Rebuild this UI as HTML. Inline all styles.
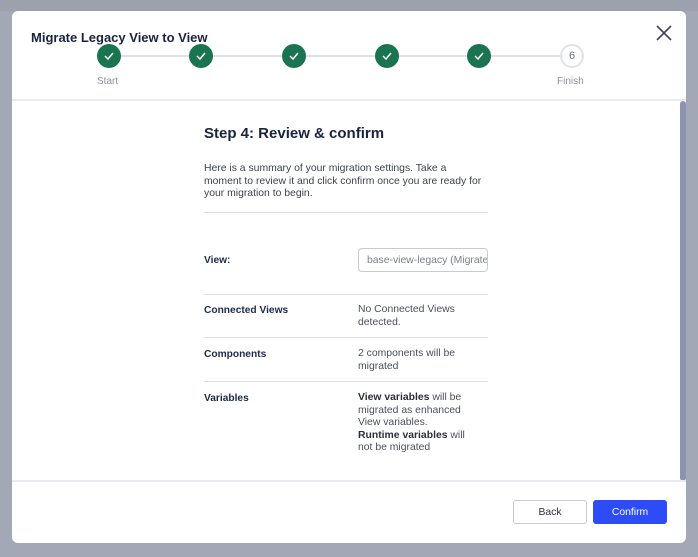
<!DOCTYPE html>
<html><head><style>
*{box-sizing:border-box;margin:0;padding:0}
body{width:698px;height:557px;background:#a3a8b6;font-family:"Liberation Sans",sans-serif;position:relative;overflow:hidden}
.topbar{position:absolute;left:0;top:0;width:698px;height:11px;background:#9ca1ae}
.modal{position:absolute;left:12px;top:11px;width:674px;height:532px;background:#fff;border-radius:6px;overflow:hidden}
.title{position:absolute;left:19px;top:19px;font-size:13px;font-weight:bold;color:#1a2340}
.x{position:absolute;left:643px;top:13px}
.line{position:absolute;top:44px;height:2px;background:#dfe1e8}
.dot{position:absolute;top:33px;width:24px;height:24px;border-radius:50%;background:#1b7450}
.dot svg{position:absolute;left:6px;top:7px}
.six{position:absolute;left:548px;top:33px;width:24px;height:24px;border-radius:50%;border:2px solid #e0e2e8;color:#6b7080;font-size:11px;text-align:center;line-height:20px}
.lbl{position:absolute;top:65px;font-size:10px;color:#8c90a0}
.hr{position:absolute;left:0;width:674px;height:2px;background:#e9eaf0}
.scroll{position:absolute;left:668px;top:90px;width:6px;height:380px;background:#8e93b0;border-radius:3px}
.h{position:absolute;left:192px;top:114px;font-size:15px;font-weight:bold;color:#1a2340}
.p{position:absolute;left:192px;top:152px;width:278px;font-size:10.4px;line-height:12.5px;color:#3d4250}
.sep{position:absolute;left:192px;width:284px;height:1px;background:#dfe1e6}
.k{position:absolute;left:192px;font-size:10.2px;font-weight:bold;color:#1f2a4a}
.v{position:absolute;left:346px;font-size:10.4px;line-height:12.5px;color:#4a4f5c;width:118px}
.v b{color:#2a2f3a}
.inp{position:absolute;left:346px;top:237px;width:130px;height:24px;border:1px solid #c8cad3;border-radius:4px;font-size:10.4px;color:#7a7f8c;padding:0 0 0 8px;white-space:nowrap;overflow:hidden;display:flex;align-items:center}
.btn{position:absolute;top:489px;height:24px;border-radius:3px;font-size:10.4px;display:flex;align-items:center;justify-content:center}
</style></head><body>
<div class="topbar"></div>
<div class="modal">
<div class="title">Migrate Legacy View to View</div>
<svg class="x" width="18" height="18" viewBox="0 0 18 18"><path d="M2 2L16 16M16 2L2 16" stroke="#3d4660" stroke-width="1.6"/></svg>
<div class="line" style="left:108px;width:450px"></div>
<div class="dot" style="left:85px"><svg width="12" height="10"><path d="M2 5l3 3 5-6" stroke="#fff" stroke-width="1.5" fill="none"/></svg></div>
<div class="dot" style="left:177px"><svg width="12" height="10"><path d="M2 5l3 3 5-6" stroke="#fff" stroke-width="1.5" fill="none"/></svg></div>
<div class="dot" style="left:270px"><svg width="12" height="10"><path d="M2 5l3 3 5-6" stroke="#fff" stroke-width="1.5" fill="none"/></svg></div>
<div class="dot" style="left:363px"><svg width="12" height="10"><path d="M2 5l3 3 5-6" stroke="#fff" stroke-width="1.5" fill="none"/></svg></div>
<div class="dot" style="left:455px"><svg width="12" height="10"><path d="M2 5l3 3 5-6" stroke="#fff" stroke-width="1.5" fill="none"/></svg></div>
<div class="six" style="background:#fff">6</div>
<div class="lbl" style="left:85px">Start</div>
<div class="lbl" style="left:545px">Finish</div>
<div class="hr" style="top:88px"></div>
<div class="scroll"></div>
<div class="h">Step 4: Review &amp; confirm</div>
<div class="p">Here is a summary of your migration settings. Take a moment to review it and click confirm once you are ready for your migration to begin.</div>
<div class="sep" style="top:201px"></div>
<div class="k" style="top:244px">View:</div>
<div class="inp">base-view-legacy (Migrated)</div>
<div class="sep" style="top:283px"></div>
<div class="k" style="top:294px">Connected Views</div>
<div class="v" style="top:293px">No Connected Views detected.</div>
<div class="sep" style="top:326px"></div>
<div class="k" style="top:338px">Components</div>
<div class="v" style="top:337px">2 components will be migrated</div>
<div class="sep" style="top:370px"></div>
<div class="k" style="top:382px">Variables</div>
<div class="v" style="top:381px"><b>View variables</b> will be migrated as enhanced View variables.<br><b>Runtime variables</b> will not be migrated</div>
<div class="hr" style="top:469px"></div>
<div class="btn" style="left:501px;width:74px;border:1px solid #c8cad3;color:#2a3142">Back</div>
<div class="btn" style="left:581px;width:74px;background:#2d4cf7;color:#fff">Confirm</div>
</div>
</body></html>
